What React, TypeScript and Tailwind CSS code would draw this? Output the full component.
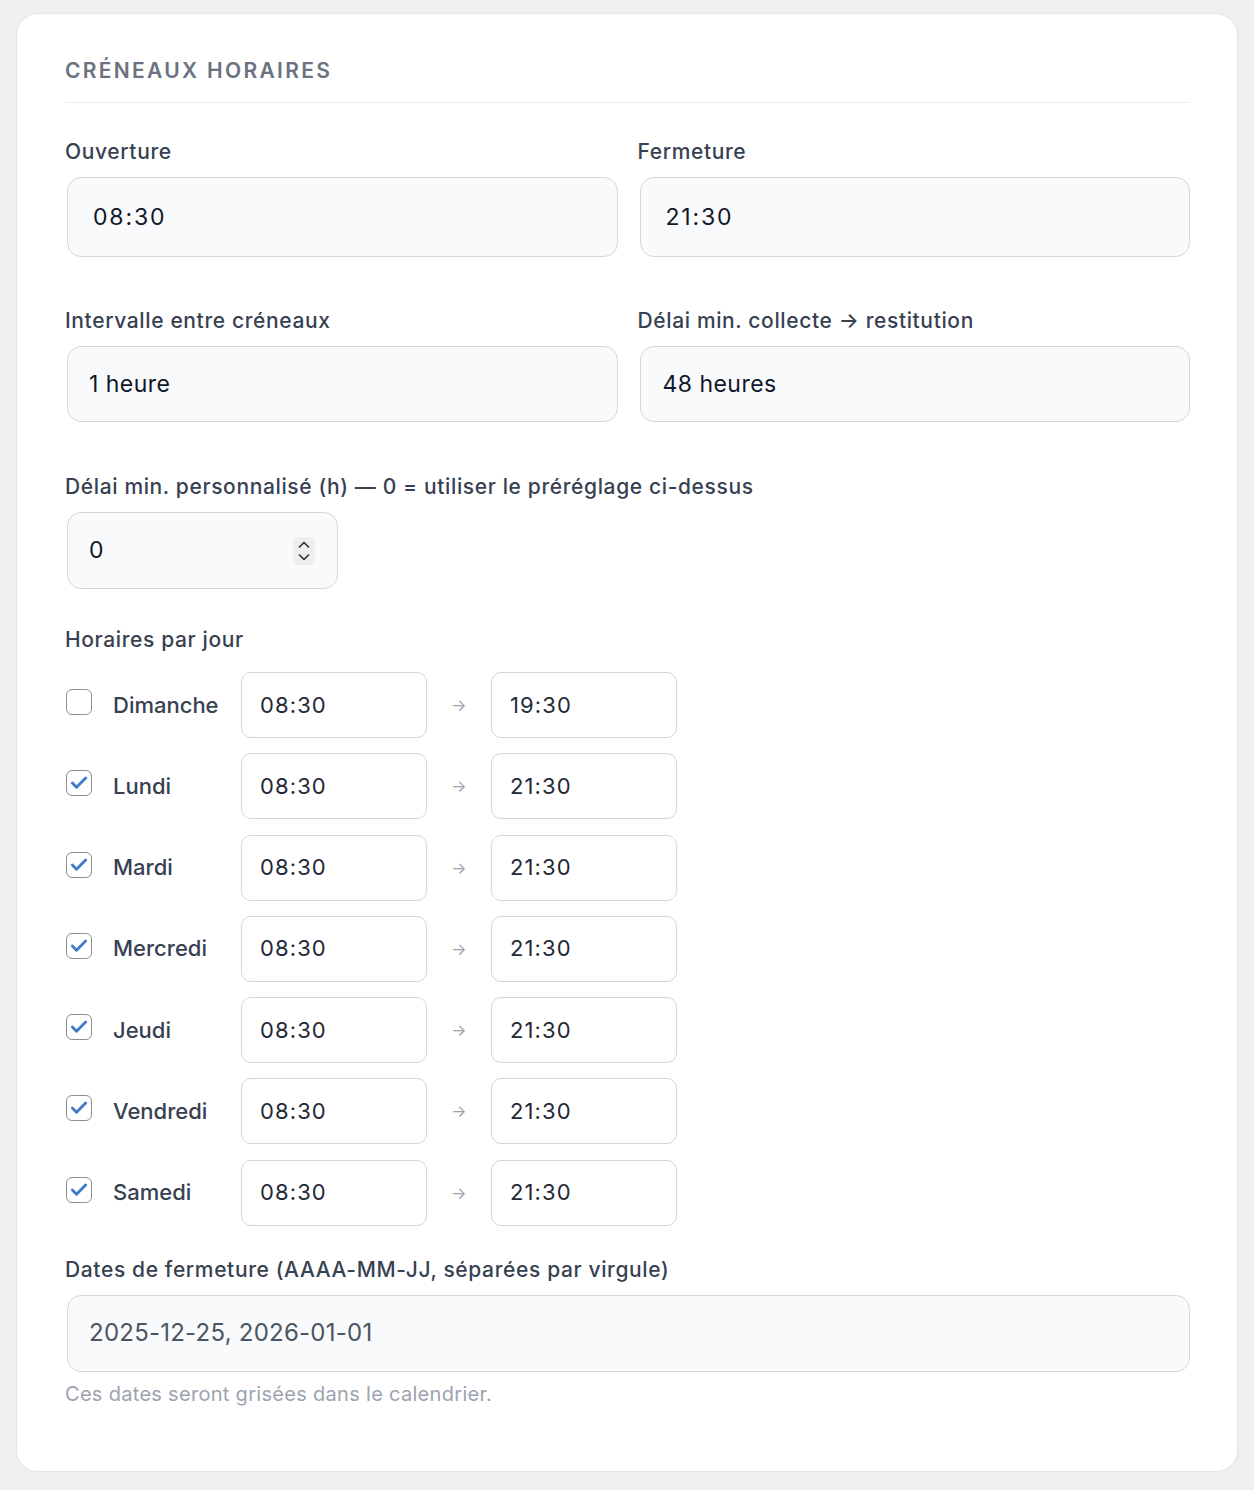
import { Check } from "lucide-react"

const days = [
  { name: "Dimanche", on: false, open: "08:30", close: "19:30" },
  { name: "Lundi", on: true, open: "08:30", close: "21:30" },
  { name: "Mardi", on: true, open: "08:30", close: "21:30" },
  { name: "Mercredi", on: true, open: "08:30", close: "21:30" },
  { name: "Jeudi", on: true, open: "08:30", close: "21:30" },
  { name: "Vendredi", on: true, open: "08:30", close: "21:30" },
  { name: "Samedi", on: true, open: "08:30", close: "21:30" },
]

const font = { fontFamily: "Inter, 'Noto Sans', sans-serif" }

export default function App() {
  return (
    <div className="min-h-screen bg-[#efefef] pt-[13px] px-[16px] pb-[18px]" style={font}>
      <div className="bg-white rounded-[22px] border border-[#e5e5e5] pt-[43px] pb-[64px] pl-[48px] pr-[47px]">
        {/* Header */}
        <h2 className="text-[21px] leading-[28px] font-semibold tracking-[0.11em] uppercase text-[#6b7280] pb-[17px] border-b border-[#ececec]">
          Créneaux horaires
        </h2>

        {/* Opening / closing */}
        <div className="grid grid-cols-2 gap-x-[20px] mt-[35px]">
          <Field label="Ouverture" value="08:30" h="h-[80px]" pad="pl-[25px]" time />
          <Field label="Fermeture" value="21:30" h="h-[80px]" pad="pl-[25px]" time />
        </div>

        <div className="grid grid-cols-2 gap-x-[20px] mt-[50px]">
          <Field label="Intervalle entre créneaux" value="1 heure" h="h-[76px]" pad="pl-[21px]" />
          <Field label="Délai min. collecte → restitution" value="48 heures" h="h-[76px]" pad="pl-[22px]" />
        </div>

        {/* Custom delay */}
        <div className="mt-[51px]">
          <Label>Délai min. personnalisé (h) — 0 = utiliser le préréglage ci-dessus</Label>
          <div className="mt-[11px] ml-[2px] w-[271px] h-[77px] rounded-[14px] border-[1.5px] border-[#d4d6d9] bg-[#f8fafc] flex items-center pl-[21px] pr-[22px]">
            <span className="flex-1 text-[23px] text-[#111827]">0</span>
            <div className="w-[22px] h-[28px] rounded-[5px] bg-[#eceef0] flex flex-col items-center justify-center">
              <svg width="14" height="22" viewBox="0 0 14 22" fill="none" stroke="#333" strokeWidth="1.7" strokeLinecap="round" strokeLinejoin="round">
                <path d="M2.5 7 L7 2.5 L11.5 7" />
                <path d="M2.5 15 L7 19.5 L11.5 15" />
              </svg>
            </div>
          </div>
        </div>

        {/* Per day */}
        <div className="mt-[37px]">
          <Label>Horaires par jour</Label>
          <div className="mt-[18px] flex flex-col gap-[15.3px]">
            {days.map(d => (
              <div key={d.name} className="flex items-center h-[66px]">
                <div className="w-[26px] h-[26px] ml-[1px] -mt-[6px] rounded-[6px] border-[1.5px] border-[#8d8f93] bg-white flex items-center justify-center">
                  {d.on && <Check size={20} strokeWidth={3.4} className="text-[#3f7bc8]" />}
                </div>
                <span className="ml-[21px] w-[128px] text-[22px] font-medium text-[#374151]">{d.name}</span>
                <TimeBox value={d.open} />
                <span className="w-[64px] text-center text-[16px] text-[#9ca3af]">→</span>
                <TimeBox value={d.close} />
              </div>
            ))}
          </div>
        </div>

        {/* Closing dates */}
        <div className="mt-[30px]">
          <Label>Dates de fermeture (AAAA-MM-JJ, séparées par virgule)</Label>
          <div className="mt-[11px] ml-[2px] h-[77px] rounded-[14px] border-[1.5px] border-[#d4d6d9] bg-[#f8fafc] flex items-center pl-[21px]">
            <span className="text-[24px] tracking-[0.01em] text-[#4b5563]">2025-12-25, 2026-01-01</span>
          </div>
          <p className="mt-[9px] text-[20px] leading-[26px] tracking-[0.015em] text-[#9ca3af]">Ces dates seront grisées dans le calendrier.</p>
        </div>
      </div>
    </div>
  )
}

function Label({ children }: { children: React.ReactNode }) {
  return <p className="text-[21px] leading-[28px] tracking-[0.03em] font-medium text-[#374151]">{children}</p>
}

function Field({ label, value, h, pad, time = false }: any) {
  return (
    <div>
      <Label>{label}</Label>
      <div className={`mt-[11px] ml-[2px] ${h} ${pad} rounded-[14px] border-[1.5px] border-[#d4d6d9] bg-[#f8fafc] flex items-center`}>
        <span className={`text-[23px] text-[#111827] ${time ? "tracking-[0.08em]" : "tracking-[0.02em]"}`}>{value}</span>
      </div>
    </div>
  )
}

function TimeBox({ value }: { value: string }) {
  return (
    <div className="w-[186px] h-[66px] rounded-[10px] border-[1.5px] border-[#d4d6d9] bg-white flex items-center pl-[18px]">
      <span className="text-[22px] tracking-[0.05em] text-[#1f2937]">{value}</span>
    </div>
  )
}
